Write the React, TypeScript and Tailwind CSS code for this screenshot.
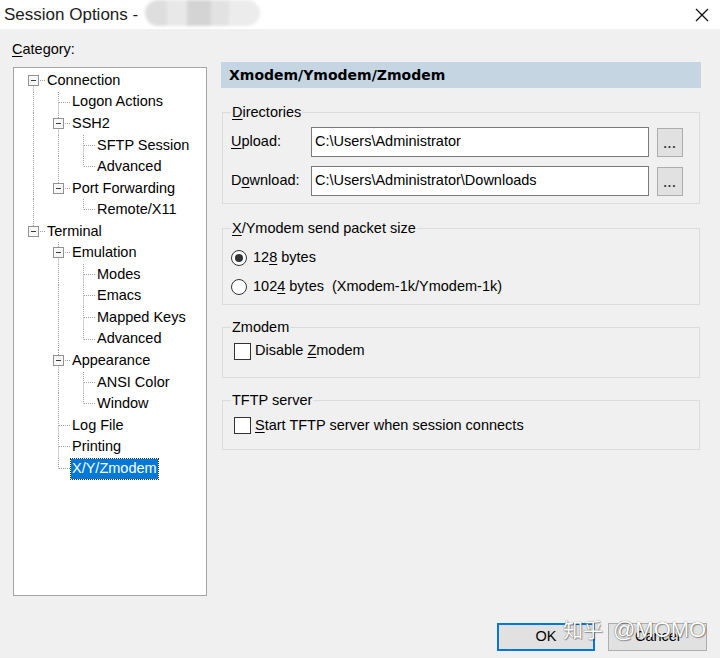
import React from "react"

type TreeNode = { label: string; children?: TreeNode[]; selected?: boolean }

const tree: TreeNode[] = [
  {
    label: "Connection",
    children: [
      { label: "Logon Actions" },
      { label: "SSH2", children: [{ label: "SFTP Session" }, { label: "Advanced" }] },
      { label: "Port Forwarding", children: [{ label: "Remote/X11" }] },
    ],
  },
  {
    label: "Terminal",
    children: [
      {
        label: "Emulation",
        children: [{ label: "Modes" }, { label: "Emacs" }, { label: "Mapped Keys" }, { label: "Advanced" }],
      },
      { label: "Appearance", children: [{ label: "ANSI Color" }, { label: "Window" }] },
      { label: "Log File" },
      { label: "Printing" },
      { label: "X/Y/Zmodem", selected: true },
    ],
  },
]

type Row = {
  label: string
  guides: boolean[]
  hasNext: boolean
  first: boolean
  open: boolean
  selected?: boolean
}

const ROW = 21.56
const LINE = "#a0a0a0"

function flatten(nodes: TreeNode[], depth: number, guides: boolean[], out: Row[]) {
  nodes.forEach((n, i) => {
    const hasNext = i < nodes.length - 1
    out.push({
      label: n.label,
      guides,
      hasNext,
      first: depth === 0 && i === 0,
      open: !!n.children,
      selected: n.selected,
    })
    if (n.children) flatten(n.children, depth + 1, [...guides, hasNext], out)
  })
}

const rows: Row[] = []
flatten(tree, 0, [], rows)

function Guide({ on }: { on: boolean }) {
  return (
    <svg width={25} height={ROW} className="shrink-0">
      {on && <line x1={12.5} y1={0} x2={12.5} y2={ROW} stroke={LINE} strokeDasharray="1 1" />}
    </svg>
  )
}

function Connector({ row }: { row: Row }) {
  return (
    <svg width={25} height={ROW} className="shrink-0">
      {!row.first && <line x1={12.5} y1={0} x2={12.5} y2={10.5} stroke={LINE} strokeDasharray="1 1" />}
      {row.hasNext && <line x1={12.5} y1={10.5} x2={12.5} y2={ROW} stroke={LINE} strokeDasharray="1 1" />}
      <line x1={13} y1={10.5} x2={25} y2={10.5} stroke={LINE} strokeDasharray="1 1" />
      {row.open && (
        <>
          <rect x={7.5} y={5.5} width={10} height={10} fill="#f7f7f7" stroke="#919191" />
          <line x1={10} y1={10.5} x2={15} y2={10.5} stroke="#3a3a3a" />
        </>
      )}
    </svg>
  )
}

function Group({ title, className, children }: { title: React.ReactNode; className: string; children: React.ReactNode }) {
  return (
    <fieldset className={`mx-[1px] border border-[#dcdcdc] pl-[8px] ${className}`}>
      <legend className="px-[1px] leading-[17px]">{title}</legend>
      {children}
    </fieldset>
  )
}

const U = ({ children }: { children: React.ReactNode }) => (
  <span className="underline underline-offset-[2px]">{children}</span>
)

function PathRow({ label, value }: { label: React.ReactNode; value: string }) {
  return (
    <div className="flex items-center h-[30px]">
      <div className="w-[80px]">{label}</div>
      <div className="w-[338px] h-[30px] border border-[#7a7a7a] bg-white pl-[3px] flex items-center">{value}</div>
      <div className="ml-[8px] w-[26px] h-[29px] border border-[#adadad] bg-[#e1e1e1] flex items-end justify-center pb-[6px] text-[12px] font-bold tracking-[1px] leading-none text-[#333]">
        ...
      </div>
    </div>
  )
}

function Radio({ checked }: { checked?: boolean }) {
  return (
    <div className="w-[16px] h-[16px] rounded-full border border-[#333] bg-white flex items-center justify-center">
      {checked && <div className="w-[8px] h-[8px] rounded-full bg-[#333]" />}
    </div>
  )
}

function CheckBox() {
  return <div className="ml-[3px] w-[17px] h-[17px] border border-[#333] bg-white" />
}

export default function App() {
  return (
    <div className="relative w-[720px] h-[658px] overflow-hidden bg-[#f0f0f0] font-['Liberation_Sans',Arial,sans-serif] text-[14.5px] text-black">
      {/* Title bar */}
      <div className="h-[29px] bg-white flex items-center pl-[4px] pr-[11px]">
        <span className="text-[17px] text-[#1b1b1b]">Session Options -</span>
        <div className="ml-[7px] -mt-[3px] w-[115px] h-[26px] rounded-[13px] overflow-hidden flex blur-[1.5px]">
          <div className="w-[22px] bg-[#dedede]" />
          <div className="w-[20px] bg-[#e8e8e8]" />
          <div className="w-[24px] bg-[#d4d4d4]" />
          <div className="w-[18px] bg-[#e2e2e2]" />
          <div className="w-[31px] bg-[#ececec]" />
        </div>
        <div className="flex-1" />
        <svg width={14} height={14} viewBox="0 0 14 14">
          <path d="M1 1 L13 13 M13 1 L1 13" stroke="#111" strokeWidth={1.3} />
        </svg>
      </div>

      <div className="flex">
        {/* Category tree */}
        <div className="ml-[13px] w-[194px] pt-[11px]">
          <div className="-ml-[1px] leading-[18px]">
            <U>C</U>ategory:
          </div>
          <div className="mt-[9px] h-[529px] border border-[#a5a5a5] bg-white pl-[7px] pt-[2px]">
            {rows.map((r, i) => (
              <div key={i} className="flex items-center h-[21.56px]">
                {r.guides.map((g, j) => (
                  <Guide key={j} on={g} />
                ))}
                <Connector row={r} />
                {r.selected ? (
                  <span className="h-[20px] px-[1px] flex items-center bg-[#0078d7] text-white outline outline-1 outline-dotted outline-[#333]">
                    {r.label}
                  </span>
                ) : (
                  <span className="px-[1px] whitespace-nowrap">{r.label}</span>
                )}
              </div>
            ))}
          </div>
        </div>

        {/* Options */}
        <div className="ml-[14px] w-[480px] pt-[33px]">
          <div className="h-[26px] bg-[#c5d5e2] pl-[8px] flex items-center font-['DejaVu_Sans',sans-serif] font-bold text-[14px]">
            Xmodem/Ymodem/Zmodem
          </div>

          <Group title={<><U>D</U>irectories</>} className="mt-[15.5px] pt-[6.5px] pb-[7px] pr-[15px]">
            <div className="flex flex-col gap-[9px]">
              <PathRow label={<><U>U</U>pload:</>} value="C:\Users\Administrator" />
              <PathRow label={<>D<U>o</U>wnload:</>} value="C:\Users\Administrator\Downloads" />
            </div>
          </Group>

          <Group title={<><U>X</U>/Ymodem send packet size</>} className="mt-[16px] pt-[10.5px] pb-[6px]">
            <div className="flex flex-col gap-[8px]">
              <div className="flex items-center h-[21px]">
                <Radio checked />
                <span className="ml-[6px]">
                  12<U>8</U> bytes
                </span>
              </div>
              <div className="flex items-center h-[21px]">
                <Radio />
                <span className="ml-[6px] whitespace-pre">
                  102<U>4</U> bytes  (Xmodem-1k/Ymodem-1k)
                </span>
              </div>
            </div>
          </Group>

          <Group title="Zmodem" className="mt-[14.5px] pt-[4.5px] pb-[15px]">
            <div className="flex items-center h-[21px]">
              <CheckBox />
              <span className="ml-[4px]">
                Disable <U>Z</U>modem
              </span>
            </div>
          </Group>

          <Group title="TFTP server" className="mt-[14.5px] pt-[6px] pb-[13px]">
            <div className="flex items-center h-[21px]">
              <CheckBox />
              <span className="ml-[4px]">
                <U>S</U>tart TFTP server when session connects
              </span>
            </div>
          </Group>
        </div>
      </div>

      {/* Buttons */}
      <div className="mt-[27px] flex justify-end gap-[13px] pr-[13px]">
        <button className="w-[98px] h-[28px] border-2 border-[#0078d7] bg-[#e1e1e1]">OK</button>
        <button className="w-[99px] h-[28px] border border-[#adadad] bg-[#e1e1e1]">Cancel</button>
      </div>

      {/* Watermark */}
      <div className="absolute left-[563px] top-[613px] flex items-center gap-[10px] text-white [text-shadow:0_0_1px_#555,1px_1px_1px_rgba(0,0,0,0.35)]">
        <span className="font-['Noto_Sans_CJK_SC',sans-serif] text-[20px]">知乎</span>
        <span className="font-['Liberation_Sans',sans-serif] text-[22px]">@MOMO</span>
      </div>
    </div>
  )
}
